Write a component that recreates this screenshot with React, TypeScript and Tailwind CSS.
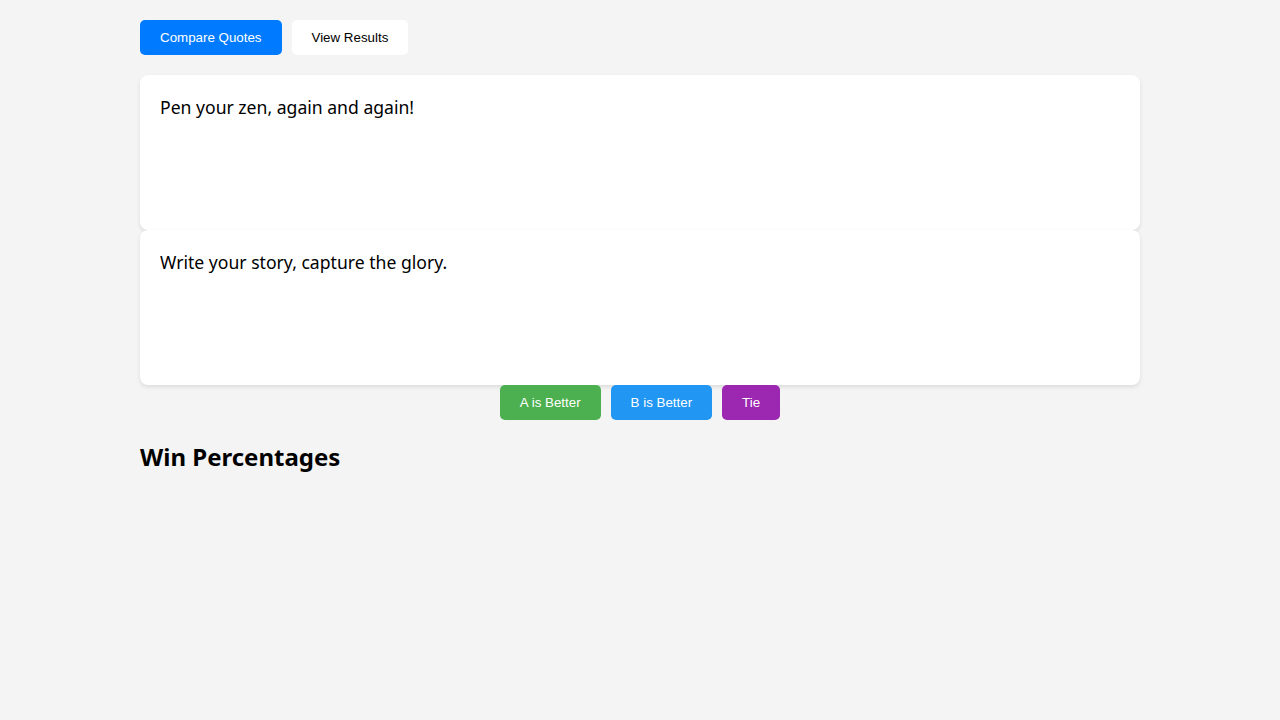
import * as React from "react";

const quotes = ["Pen your zen, again and again!", "Write your story, capture the glory."];

export default function App() {
  const [tab, setTab] = React.useState("compare");

  return (
    <div className="min-h-screen bg-[#f4f4f4] font-['Noto_Sans',sans-serif] text-black">
      <div className="w-[1000px] mx-auto pt-5">
        <div className="flex gap-[10px] font-['Liberation_Sans',Arial,sans-serif] text-[13.333px] leading-[15px]">
          <button
            onClick={() => setTab("compare")}
            className={`px-5 py-[10px] rounded-[5px] ${tab === "compare" ? "bg-[#007bff] text-white" : "bg-white text-black"}`}
          >
            Compare Quotes
          </button>
          <button
            onClick={() => setTab("results")}
            className={`px-5 py-[10px] rounded-[5px] ${tab === "results" ? "bg-[#007bff] text-white" : "bg-white text-black"}`}
          >
            View Results
          </button>
        </div>

        <div className="mt-5">
          {quotes.map((q) => (
            <div
              key={q}
              className="h-[155px] bg-white rounded-[8px] px-5 pt-[19px] shadow-[0_2px_4px_rgba(0,0,0,0.1)] text-[17.6px] leading-[26px]"
            >
              {q}
            </div>
          ))}
        </div>

        <div className="flex justify-center gap-[10px] font-['Liberation_Sans',Arial,sans-serif] text-[13.333px] leading-[15px] text-white">
          <button className="px-5 py-[10px] rounded-[5px] bg-[#4caf50]">A is Better</button>
          <button className="px-5 py-[10px] rounded-[5px] bg-[#2196f3]">B is Better</button>
          <button className="px-5 py-[10px] rounded-[5px] bg-[#9c27b0]">Tie</button>
        </div>

        <h2 className="mt-[19px] text-[24px] leading-[36px] font-bold">Win Percentages</h2>
      </div>
    </div>
  );
}
